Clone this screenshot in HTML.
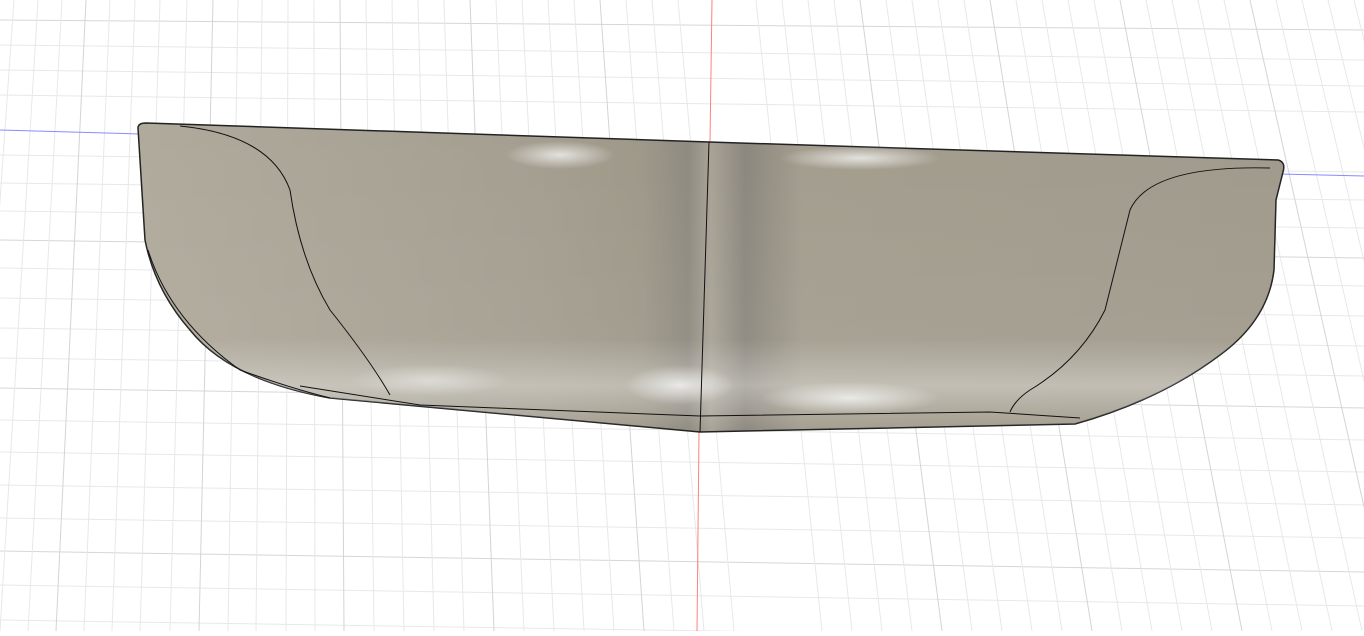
<!DOCTYPE html>
<html><head><style>html,body{margin:0;padding:0;background:#fff;overflow:hidden}</style></head>
<body>
<svg width="1364" height="631" viewBox="0 0 1364 631" xmlns="http://www.w3.org/2000/svg">
<defs>
<linearGradient id="h" x1="0" x2="1" y1="0" y2="0">
<stop offset="0" stop-color="#b0aa9c"/>
<stop offset="0.35" stop-color="#a49e90"/>
<stop offset="0.44" stop-color="#9e9889"/>
<stop offset="0.48" stop-color="#8f8a80"/>
<stop offset="0.5" stop-color="#a8a296"/>
<stop offset="0.53" stop-color="#8c877e"/>
<stop offset="0.58" stop-color="#a39d8e"/>
<stop offset="1" stop-color="#a09a8c"/>
</linearGradient>
<linearGradient id="v" x1="0" x2="0" y1="0" y2="1">
<stop offset="0" stop-color="#fff" stop-opacity="0"/>
<stop offset="0.7" stop-color="#fff" stop-opacity="0.05"/>
<stop offset="0.85" stop-color="#fff" stop-opacity="0.35"/>
<stop offset="1" stop-color="#fff" stop-opacity="0"/>
</linearGradient>
<radialGradient id="r1" cx="0.5" cy="0.5" r="0.5"><stop offset="0" stop-color="#fff" stop-opacity="0.7"/><stop offset="1" stop-color="#fff" stop-opacity="0"/></radialGradient>
</defs>
<g stroke="#e8e8e8" stroke-width="1">
<line x1="0" y1="45" x2="1364" y2="60"/>
<line x1="0" y1="70" x2="1364" y2="86"/>
<line x1="0" y1="95" x2="1364" y2="112"/>
<line x1="0" y1="155" x2="1364" y2="172"/>
<line x1="0" y1="183" x2="1364" y2="200"/>
<line x1="0" y1="211" x2="1364" y2="228"/>
<line x1="0" y1="268" x2="1364" y2="286"/>
<line x1="0" y1="298" x2="1364" y2="316"/>
<line x1="0" y1="328" x2="1364" y2="346"/>
<line x1="0" y1="358" x2="1364" y2="376"/>
<line x1="0" y1="420" x2="1364" y2="440"/>
<line x1="0" y1="452" x2="1364" y2="472"/>
<line x1="0" y1="485" x2="1364" y2="505"/>
<line x1="0" y1="518" x2="1364" y2="538"/>
<line x1="0" y1="585" x2="1364" y2="606"/>
<line x1="0" y1="620" x2="1364" y2="641"/>
</g>
<g stroke="#d6d6d6" stroke-width="1">
<line x1="0" y1="20" x2="1364" y2="30"/>
<line x1="0" y1="240" x2="1364" y2="258"/>
<line x1="0" y1="388" x2="1364" y2="408"/>
<line x1="0" y1="551" x2="1364" y2="572"/>
</g>
<g stroke="#e8e8e8">
<line x1="14" y1="0" x2="-30" y2="631"/>
<line x1="38" y1="0" x2="0" y2="631"/>
<line x1="62" y1="0" x2="28" y2="631"/>
<line x1="110" y1="0" x2="84" y2="631"/>
<line x1="135" y1="0" x2="112" y2="631"/>
<line x1="160" y1="0" x2="140" y2="631"/>
<line x1="187" y1="0" x2="170" y2="631"/>
<line x1="238" y1="0" x2="228" y2="631"/>
<line x1="262" y1="0" x2="256" y2="631"/>
<line x1="288" y1="0" x2="286" y2="631"/>
<line x1="314" y1="0" x2="315" y2="631"/>
<line x1="366" y1="0" x2="374" y2="631"/>
<line x1="392" y1="0" x2="404" y2="631"/>
<line x1="418" y1="0" x2="434" y2="631"/>
<line x1="444" y1="0" x2="464" y2="631"/>
<line x1="496" y1="0" x2="524" y2="631"/>
<line x1="522" y1="0" x2="554" y2="631"/>
<line x1="548" y1="0" x2="584" y2="631"/>
<line x1="574" y1="0" x2="614" y2="631"/>
<line x1="626" y1="0" x2="674" y2="631"/>
<line x1="652" y1="0" x2="704" y2="631"/>
<line x1="678" y1="0" x2="734" y2="631"/>
<line x1="756" y1="0" x2="822" y2="631"/>
<line x1="782" y1="0" x2="852" y2="631"/>
<line x1="808" y1="0" x2="882" y2="631"/>
<line x1="834" y1="0" x2="912" y2="631"/>
<line x1="886" y1="0" x2="972" y2="631"/>
<line x1="912" y1="0" x2="1002" y2="631"/>
<line x1="938" y1="0" x2="1032" y2="631"/>
<line x1="964" y1="0" x2="1062" y2="631"/>
<line x1="1016" y1="0" x2="1122" y2="631"/>
<line x1="1042" y1="0" x2="1152" y2="631"/>
<line x1="1068" y1="0" x2="1182" y2="631"/>
<line x1="1094" y1="0" x2="1212" y2="631"/>
<line x1="1146" y1="0" x2="1272" y2="631"/>
<line x1="1172" y1="0" x2="1302" y2="631"/>
<line x1="1198" y1="0" x2="1332" y2="631"/>
<line x1="1224" y1="0" x2="1362" y2="631"/>
<line x1="1276" y1="0" x2="1422" y2="631"/>
<line x1="1302" y1="0" x2="1452" y2="631"/>
<line x1="1328" y1="0" x2="1482" y2="631"/>
<line x1="1354" y1="0" x2="1512" y2="631"/>
</g>
<g stroke="#d4d4d4">
<line x1="86" y1="0" x2="56" y2="631"/>
<line x1="213" y1="0" x2="199" y2="631"/>
<line x1="340" y1="0" x2="344" y2="631"/>
<line x1="470" y1="0" x2="494" y2="631"/>
<line x1="600" y1="0" x2="644" y2="631"/>
<line x1="860" y1="0" x2="942" y2="631"/>
<line x1="990" y1="0" x2="1092" y2="631"/>
<line x1="1120" y1="0" x2="1242" y2="631"/>
<line x1="1250" y1="0" x2="1392" y2="631"/>
</g>
<line x1="0" y1="130" x2="140" y2="134" stroke="#8a8aff"/>
<line x1="1280" y1="174" x2="1364" y2="176" stroke="#8a8aff"/>
<line x1="712" y1="0" x2="710" y2="142" stroke="#ff8080"/>
<line x1="699" y1="432" x2="697" y2="631" stroke="#ff8080"/>
<path d="M138,128 Q138,123 146,123 L709,142 L1278,160 Q1286,162 1283,172 L1276,200 L1274,270 Q1268,320 1220,355 Q1160,400 1075,424 L700,432 L330,398 Q230,380 190,330 Q155,290 145,240 Z" fill="url(#h)" stroke="#222" stroke-width="1.5"/>
<path d="M138,128 Q138,123 146,123 L709,142 L1278,160 Q1286,162 1283,172 L1276,200 L1274,270 Q1268,320 1220,355 Q1160,400 1075,424 L700,432 L330,398 Q230,380 190,330 Q155,290 145,240 Z" fill="url(#v)"/>
<ellipse cx="680" cy="385" rx="55" ry="20" fill="url(#r1)"/>
<ellipse cx="850" cy="398" rx="90" ry="16" fill="url(#r1)"/>
<ellipse cx="560" cy="155" rx="55" ry="14" fill="url(#r1)"/>
<ellipse cx="860" cy="158" rx="80" ry="12" fill="url(#r1)"/>
<ellipse cx="430" cy="380" rx="80" ry="16" fill="url(#r1)" opacity="0.6"/>
<g fill="none" stroke="#111" stroke-width="1">
<path d="M709,142 L700,432"/>
<path d="M180,126 Q270,135 290,190 Q300,260 330,310 Q370,360 390,395"/>
<path d="M1270,168 Q1150,165 1130,210 Q1115,270 1105,310 Q1080,360 1030,390 Q1015,400 1010,412"/>
<path d="M300,386 L420,405 L700,416 L990,412 L1080,418"/>
<path d="M148,250 Q170,320 240,370 Q290,388 330,398"/>
</g>
</svg>
</body></html>
